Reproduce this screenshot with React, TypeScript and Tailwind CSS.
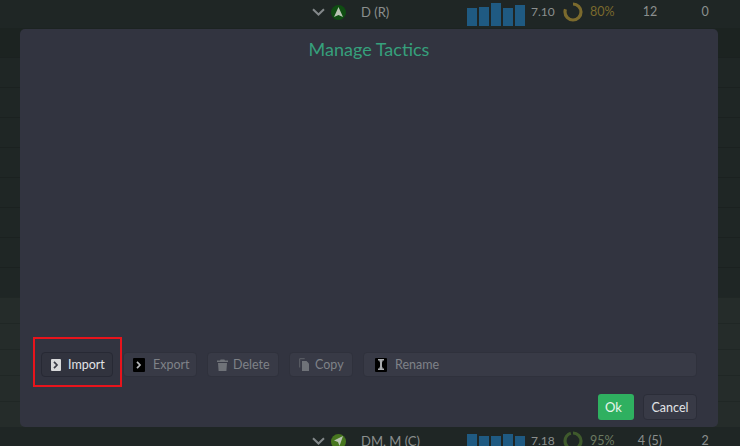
import type { ReactNode } from "react";

const Bars = ({ heights }: { heights: number[] }) => (
  <div className="flex items-end gap-[2px] h-[23px] w-[58px] mt-[4px] shrink-0">
    {heights.map((h, i) => (
      <div key={i} className="w-[10px] bg-[#1f5a82]" style={{ height: h }} />
    ))}
  </div>
);

const Ring = ({ color, pct }: { color: string; pct: number }) => {
  const c = 2 * Math.PI * 8;
  return (
    <svg width="20" height="20" viewBox="0 0 20 20" className="-rotate-90 shrink-0">
      <circle cx="10" cy="10" r="8" fill="none" stroke={color} strokeWidth="3.2" strokeDasharray={`${(c * pct) / 100} ${c}`} />
    </svg>
  );
};

const Chevron = () => (
  <svg width="13" height="8" viewBox="0 0 13 8" fill="none">
    <path d="M1 1.2l5.5 5.3L12 1.2" stroke="#83888a" strokeWidth="2" />
  </svg>
);

type RowProps = {
  arrow: string;
  pos: string;
  bars: number[];
  rating: string;
  ringColor: string;
  ringPct: number;
  pct: string;
  pctClass: string;
  apps: string;
  goals: string;
  badge: string;
};

const PlayerRow = ({ arrow, pos, bars, rating, ringColor, ringPct, pct, pctClass, apps, goals, badge }: RowProps) => (
  <div className="flex items-center h-[28px] pb-[4px] pl-[312px] text-[12.5px] leading-[10px] text-[#8b8f8e]">
    <div className="w-[19px] shrink-0"><Chevron /></div>
    <div className={`w-[15px] h-[15px] rounded-full flex items-center justify-center shrink-0 ${badge}`}>
      <svg width="9" height="10" viewBox="0 0 9 10">
        <path d={arrow} fill="#b9c4b4" />
      </svg>
    </div>
    <div className="w-[121px] pl-[15px] shrink-0 text-[13px]">{pos}</div>
    <Bars heights={bars} />
    <div className="w-[38px] pl-[6px] shrink-0 text-[12px]">{rating}</div>
    <Ring color={ringColor} pct={ringPct} />
    <div className={`w-[37px] pl-[7px] shrink-0 ${pctClass}`}>{pct}</div>
    <div className="w-[60px] text-center shrink-0">{apps}</div>
    <div className="w-[50px] text-center shrink-0">{goals}</div>
  </div>
);

const ActionButton = ({ icon, label, active, className }: { icon: ReactNode; label: string; active?: boolean; className: string }) => (
  <button className={`h-[25px] flex items-center pl-[9px] rounded-[4px] border text-[12.5px] ${active ? "border-[#272934] bg-[#31333e] text-[#e2e4e6]" : "border-[#2f313c] bg-[#383a46] text-[#7f8288]"} ${className}`}>
    {icon}
    <span className="pt-[2px]">{label}</span>
  </button>
);

const ChevronBox = ({ light }: { light?: boolean }) => (
  <span className={`rounded-[1px] flex items-center justify-center ${light ? "w-[10px] h-[12px] bg-[#d8d9da]" : "w-[12px] h-[14px] bg-black"}`}>
    <svg width="6" height="8" viewBox="0 0 6 8" fill="none">
      <path d="M1 .8l3 3.2-3 3.2" stroke={light ? "#3a3c46" : "#b8babd"} strokeWidth="1.7" />
    </svg>
  </span>
);

const TrashIcon = () => (
  <svg width="11" height="12" viewBox="0 0 11 12" fill="#6f7278">
    <path d="M0 1.5h3L3.6.5h3.8l.6 1h3V3H0zM1 4h9l-.6 8H1.6z" />
  </svg>
);

const CopyIcon = () => (
  <svg width="11" height="13" viewBox="0 0 11 13" fill="none">
    <path d="M.7 9.5V.7h5" stroke="#5f6269" />
    <path d="M3 3h4.500L10 5.500V13H3z" fill="#6f7278" />
  </svg>
);

const CursorIcon = () => (
  <span className="w-[12px] h-[14px] rounded-[1px] bg-black flex items-center justify-center">
    <svg width="8" height="11" viewBox="0 0 8 11" fill="#a9abae">
      <path d="M1 0h6v1.500H5.500v1L5 3.500v4l.5 1v1H7V11H1V9.500h1.500v-1l.5-1v-4l-.5-1v-1H1z" />
    </svg>
  </span>
);

const darkRows = [0, 1, 2, 3, 4, 5, 6, 7];
const lightRows = [0, 1, 2, 3, 4];

const App = () => {
  return (
    <div className="relative w-[740px] h-[446px] overflow-hidden bg-[#1f2625] font-['Lato',sans-serif]">
      <PlayerRow
        arrow="M4.500 0L9 10 4.500 8 0 10z"
        pos="D (R)"
        bars={[18, 19, 23, 18, 21]}
        rating="7.10"
        ringColor="#7b6a2d"
        ringPct={80}
        pct="80%"
        pctClass="text-[#7b6a2d]"
        apps="12"
        goals="0"
        badge="bg-[#0f4d12]"
      />
      <div className="h-[29px] bg-[#1c2321]" />
      {darkRows.map((i) => (
        <div key={i} className="h-[30px] bg-[#1f2625] border-t border-[#1b2120]" />
      ))}
      {lightRows.map((i) => (
        <div key={i} className="h-[26px] bg-[#252c2a] border-t border-[#202725]" />
      ))}
      <div className="h-[2px]" />
      <PlayerRow
        arrow="M9 0L5.500 10 4 6 0 4.500z"
        pos="DM, M (C)"
        bars={[21, 19, 19, 21, 19]}
        rating="7.18"
        ringColor="#3f5a2c"
        ringPct={95}
        pct="95%"
        pctClass="text-[#6c7a62]"
        apps="4 (5)"
        goals="2"
        badge="bg-[#47761f]"
      />

      <div className="absolute left-[20px] top-[29px] w-[698px] h-[398px] rounded-[5px] bg-[#323440] flex flex-col px-[21px] pb-[7px]">
        <h1 className="text-center text-[18px] leading-[22px] pt-[9px] text-[#36a07c]">Manage Tactics</h1>
        <div className="flex-1" />
        <div className="flex gap-[10px] mb-[17px]">
          <ActionButton icon={<ChevronBox light />} label="Import" active className="w-[72px] gap-[7px]" />
          <ActionButton icon={<ChevronBox />} label="Export" className="w-[74px] gap-[8px]" />
          <ActionButton icon={<TrashIcon />} label="Delete" className="w-[72px] gap-[5px]" />
          <ActionButton icon={<CopyIcon />} label="Copy" className="w-[64px] gap-[5px]" />
          <ActionButton icon={<CursorIcon />} label="Rename" className="flex-1 pl-[11px] gap-[8px]" />
        </div>
        <div className="flex justify-end gap-[9px]">
          <button className="w-[36px] h-[26px] rounded-[3px] bg-[#2fb060] text-[#e8f5ec] text-[13px] text-left pl-[7px] pt-[2px]">Ok</button>
          <button className="w-[54px] h-[26px] rounded-[4px] border border-[#2b2d38] bg-[#383a46] text-[#e2e4e6] text-[12.5px] pt-[2px]">Cancel</button>
        </div>
      </div>

      <div className="absolute left-[33px] top-[337px] w-[89px] h-[50px] border-2 border-[#e8141c]" />
    </div>
  );
};

export default App;
